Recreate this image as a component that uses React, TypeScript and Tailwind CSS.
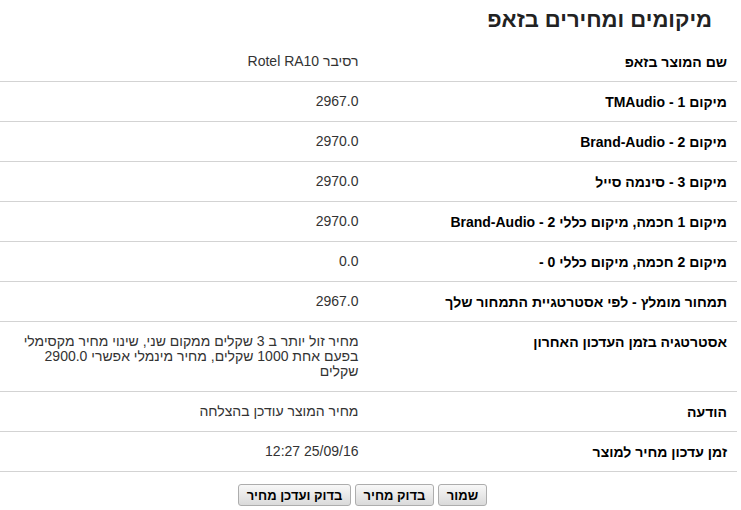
import React from 'react';

// zap prices summary (RTL)
const rows = [
  { label: 'שם המוצר בזאפ', value: 'רסיבר Rotel RA10' },
  { label: 'מיקום 1 - TMAudio', value: '2967.0' },
  { label: 'מיקום 2 - Brand-Audio', value: '2970.0' },
  { label: 'מיקום 3 - סינמה סייל', value: '2970.0' },
  { label: 'מיקום 1 חכמה, מיקום כללי 2 - Brand-Audio', value: '2970.0' },
  { label: 'מיקום 2 חכמה, מיקום כללי 0 -', value: '0.0' },
  { label: 'תמחור מומלץ - לפי אסטרטגיית התמחור שלך', value: '2967.0' },
  {
    label: 'אסטרטגיה בזמן העדכון האחרון',
    value: 'מחיר זול יותר ב 3 שקלים ממקום שני, שינוי מחיר מקסימלי בפעם אחת 1000 שקלים, מחיר מינמלי אפשרי 2900.0 שקלים',
  },
  { label: 'הודעה', value: 'מחיר המוצר עודכן בהצלחה' },
  { label: 'זמן עדכון מחיר למוצר', value: '25/09/16 12:27' },
];

const buttons = [
  { text: 'שמור', w: 'w-[49px]' },
  { text: 'בדוק מחיר', w: 'w-[79px]' },
  { text: 'בדוק ועדכן מחיר', w: 'w-[113px]' },
];

export default function App() {
  return (
    <div dir="rtl" className="w-[737px] bg-white font-['Liberation_Sans',Arial,sans-serif] text-[#222]">
      <h2 className="h-[42px] pr-[25px] pt-[7px] text-[22px] font-bold leading-[26px] text-[#222]">
        מיקומים ומחירים בזאפ
      </h2>
      <div>
        {rows.map((r) => (
          <div key={r.label} className="flex items-start border-b border-[#d3d3d3] pt-3 pb-[11px]">
            <div className="w-1/2 px-[10px] text-[14px] font-bold leading-4 text-black">{r.label}</div>
            <div className="w-1/2 px-[10px] pb-px text-[14px] leading-[15px] text-[#333]">{r.value}</div>
          </div>
        ))}
      </div>
      <div className="flex justify-center gap-1 pt-[12px] pr-[12px]">
        {buttons.map((b) => (
          <button
            key={b.text}
            className={`${b.w} h-[22px] shrink-0 rounded-[3px] border border-[#adadad] bg-gradient-to-b from-[#f8f8f8] to-[#dadada] text-[13px] font-bold leading-none text-black`}
          >
            {b.text}
          </button>
        ))}
      </div>
    </div>
  );
}
